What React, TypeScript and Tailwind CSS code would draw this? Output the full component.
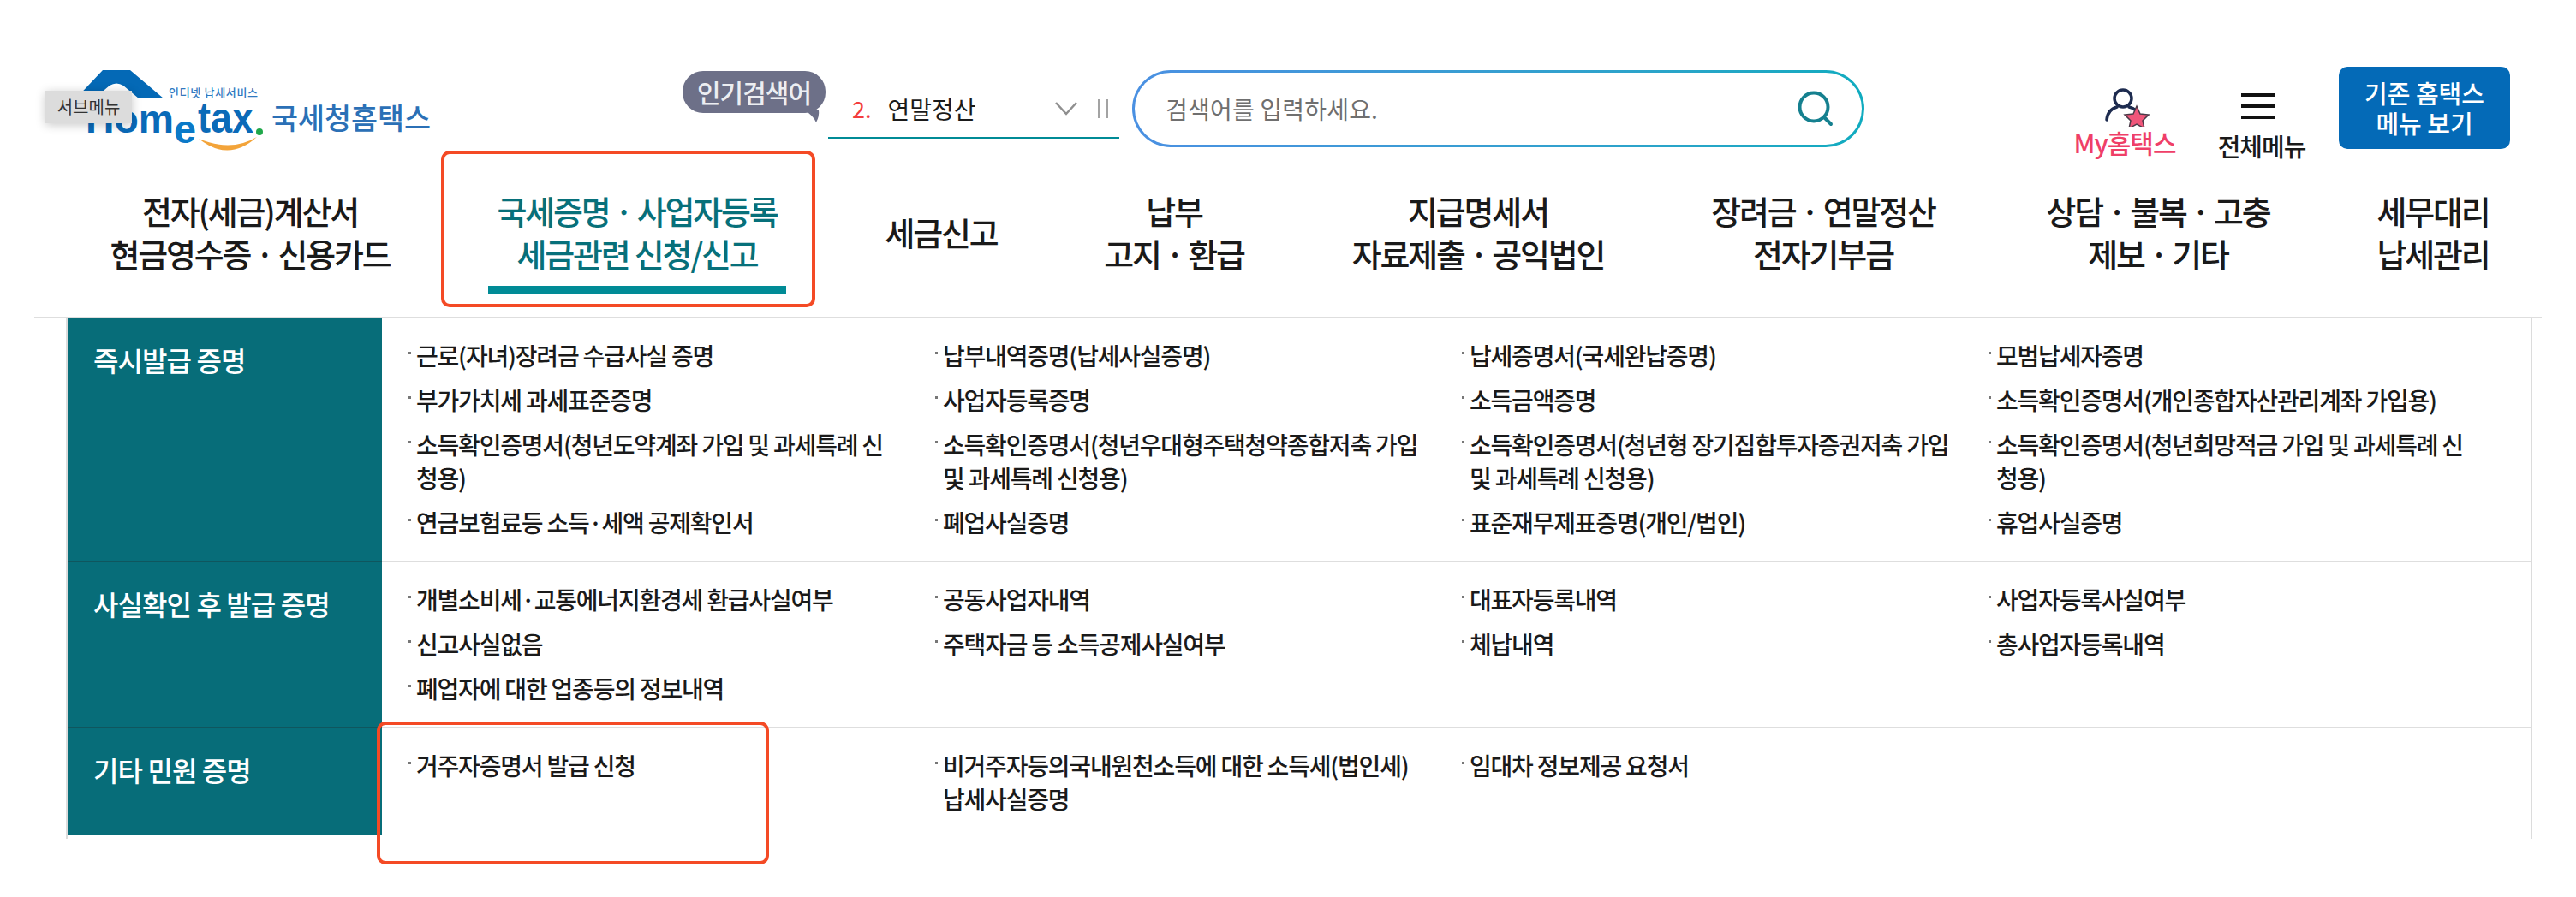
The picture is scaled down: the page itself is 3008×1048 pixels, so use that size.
import React from "react"

const navItems = [
  { lines: ["전자(세금)계산서", "현금영수증 · 신용카드"], width: "w-[464px]" },
  { lines: ["국세증명 · 사업자등록", "세금관련 신청/신고"], width: "w-[440px]", active: true },
  { lines: ["세금신고"], width: "w-[270px]" },
  { lines: ["납부", "고지 · 환급"], width: "w-[274px]" },
  { lines: ["지급명세서", "자료제출 · 공익법인"], width: "w-[436px]" },
  { lines: ["장려금 · 연말정산", "전자기부금"], width: "w-[370px]" },
  { lines: ["상담 · 불복 · 고충", "제보 · 기타"], width: "w-[412px]" },
  { lines: ["세무대리", "납세관리"], width: "w-[230px]" },
]

const sections = [
  {
    title: "즉시발급 증명",
    items: [
      "근로(자녀)장려금 수급사실 증명",
      "납부내역증명(납세사실증명)",
      "납세증명서(국세완납증명)",
      "모범납세자증명",
      "부가가치세 과세표준증명",
      "사업자등록증명",
      "소득금액증명",
      "소득확인증명서(개인종합자산관리계좌 가입용)",
      "소득확인증명서(청년도약계좌 가입 및 과세특례 신\n청용)",
      "소득확인증명서(청년우대형주택청약종합저축 가입\n및 과세특례 신청용)",
      "소득확인증명서(청년형 장기집합투자증권저축 가입\n및 과세특례 신청용)",
      "소득확인증명서(청년희망적금 가입 및 과세특례 신\n청용)",
      "연금보험료등 소득·세액 공제확인서",
      "폐업사실증명",
      "표준재무제표증명(개인/법인)",
      "휴업사실증명",
    ],
  },
  {
    title: "사실확인 후 발급 증명",
    items: [
      "개별소비세·교통에너지환경세 환급사실여부",
      "공동사업자내역",
      "대표자등록내역",
      "사업자등록사실여부",
      "신고사실없음",
      "주택자금 등 소득공제사실여부",
      "체납내역",
      "총사업자등록내역",
      "폐업자에 대한 업종등의 정보내역",
    ],
  },
  {
    title: "기타 민원 증명",
    items: [
      "거주자증명서 발급 신청",
      "비거주자등의국내원천소득에 대한 소득세(법인세)\n납세사실증명",
      "임대차 정보제공 요청서",
    ],
  },
]

const Logo = () => (
  <svg width="460" height="100" viewBox="50 80 460 100" className="block">
    <path d="M120 82h32l39 33h-29l-18-15q-8-5-16 0l-24 20H84z" fill="#0469b6" />
    <text x="100" y="155" fontFamily="Liberation Sans" fontWeight="700" fontSize="46" fill="#0a6ab8" textLength="103" lengthAdjust="spacingAndGlyphs">Hom</text>
    <text x="203" y="167" fontFamily="Liberation Sans" fontWeight="700" fontSize="46" fill="#0a79c8" textLength="26" lengthAdjust="spacingAndGlyphs">e</text>
    <text x="231" y="155" fontFamily="Liberation Sans" fontWeight="700" fontSize="50" fill="#0a6ab8" textLength="65" lengthAdjust="spacingAndGlyphs">tax</text>
    <circle cx="303" cy="154" r="4" fill="#20a84a" />
    <path d="M232 162q35 28 68-2q-30 18-68 2z" fill="#f3a43a" />
    <text x="197" y="113" fontFamily="Noto Sans CJK KR" fontWeight="500" fontSize="13" fill="#2f78bf" textLength="104">인터넷 납세서비스</text>
    <text x="317" y="151" fontFamily="Noto Sans CJK KR" fontWeight="500" fontSize="34" fill="#2b70b6" textLength="186" lengthAdjust="spacingAndGlyphs">국세청홈택스</text>
  </svg>
)

export default function App() {
  return (
    <div className="relative min-h-[1048px] w-[3008px] overflow-hidden bg-white font-['Noto_Sans_CJK_KR',sans-serif] text-[#1a1a1a]">
      <header className="flex h-[176px] items-start">
        <div className="ml-[50px] mt-[80px] w-[460px]">
          <Logo />
        </div>

        <div className="relative ml-[287px] mt-[83px] flex h-[49px] w-[167px] items-center justify-center rounded-[24px] bg-[#6d7088] text-[30px] font-medium tracking-[-1px] text-[#eceef2]">
          인기검색어
          <svg width="20" height="16" viewBox="0 0 20 16" className="absolute right-[6px] top-[45px]">
            <path d="M0 0h18q1 8-3 15Q12 7 0 0z" fill="#6d7088" />
          </svg>
        </div>

        <div className="ml-[3px] mt-[100px] flex h-[62px] w-[340px] items-center border-b-2 border-[#008b96] pl-[28px] pb-[6px]">
          <span className="text-[27px] text-[#f33d3d]">2.</span>
          <span className="ml-[19px] text-[28px] tracking-[0px]">연말정산</span>
          <svg width="26" height="16" viewBox="0 0 26 16" fill="none" stroke="#8f8f8f" strokeWidth="2.5" className="ml-[92px]">
            <path d="M1 1l12 13L25 1" />
          </svg>
          <span className="ml-[24px] h-[22px] w-[12px] border-x-[3px] border-[#a3a3a3]" />
        </div>

        <div className="ml-[15px] mt-[82px] h-[90px] w-[855px] rounded-[45px] bg-gradient-to-r from-[#4a90e2] to-[#0fabbf] p-[3px]">
          <div className="flex h-full items-center justify-between rounded-[42px] bg-white pl-[36px] pr-[33px]">
            <span className="text-[28px] tracking-[0.2px] text-[#6f6f6f]">검색어를 입력하세요.</span>
            <svg width="42" height="42" viewBox="0 0 42 42" fill="none" stroke="#15808f" strokeWidth="4" strokeLinecap="round">
              <circle cx="19" cy="19" r="16.5" />
              <path d="M31 31l8 8" />
            </svg>
          </div>
        </div>

        <div className="ml-[245px] mt-[102px] flex w-[118px] flex-col items-center">
          <svg width="54" height="46" viewBox="0 0 54 46" fill="none" className="ml-[6px]">
            <circle cx="22" cy="13" r="10" stroke="#1d2b4f" strokeWidth="3.5" />
            <path d="M3 38q1-12 12-15M29 23q5 1 8 4" stroke="#1d2b4f" strokeWidth="3.5" strokeLinecap="round" />
            <path d="M38 22l4 9 10 1-7 7 2 9-9-5-9 5 2-9-7-7 10-1z" fill="#f0567a" stroke="#4a3a48" strokeWidth="1.5" />
          </svg>
          <span className="mt-[0px] whitespace-nowrap text-[30px] font-medium leading-[36px] tracking-[-1px] text-[#ef3f68]">My홈택스</span>
        </div>

        <div className="ml-[50px] mt-[109px] flex w-[102px] flex-col items-center">
          <div className="mr-[8px] flex h-[30px] w-[40px] flex-col justify-between">
            <div className="h-[4px] bg-[#111]" />
            <div className="h-[4px] bg-[#111]" />
            <div className="h-[4px] bg-[#111]" />
          </div>
          <span className="mt-[13px] whitespace-nowrap text-[29px] font-medium leading-[36px] tracking-[-1px]">전체메뉴</span>
        </div>

        <div className="ml-[39px] mt-[78px] flex h-[96px] w-[200px] flex-col items-center justify-center rounded-[10px] bg-[#046ab7] text-[29px] font-medium leading-[35px] text-white">
          <span>기존 홈택스</span>
          <span>메뉴 보기</span>
        </div>
      </header>

      <nav className="ml-[60px] flex h-[194px] w-[2896px] items-center">
        {navItems.map((item) => (
          <div key={item.lines[0]} className={`relative flex h-full shrink-0 flex-col items-center justify-center pb-[5px] ${item.width}`}>
            {item.lines.map((line) => (
              <span
                key={line}
                className={`whitespace-nowrap text-[38px] font-medium leading-[50px] tracking-[-2.2px] ${item.active ? "text-[#07707a]" : ""}`}
              >
                {line}
              </span>
            ))}
            {item.active && <div className="absolute left-[46px] top-[158px] h-[10px] w-[348px] bg-[#008b96]" />}
          </div>
        ))}
      </nav>

      <div className="ml-[40px] h-[2px] w-[2928px] bg-[#dedede]" />

      <main className="ml-[77px] h-[608px] w-[2880px] border-x-2 border-[#dcdcdc]">
        {sections.map((section, i) => (
          <section key={section.title} className={`flex ${i === 2 ? "h-[125px]" : ""}`}>
            <h2
              className={`w-[367px] shrink-0 bg-[#076d79] pl-[30px] pt-[26px] text-[32px] font-medium leading-[44px] tracking-[-0.9px] text-white ${
                i === 2 ? "" : "border-b-2 border-[#0f565e]"
              }`}
            >
              {section.title}
            </h2>
            <ul
              className={`grid flex-1 grid-cols-[repeat(4,615px)] content-start gap-y-[13px] pl-[31px] pt-[24px] ${
                i === 2 ? "" : "border-b-2 border-[#dedede] pb-[25px]"
              }`}
            >
              {section.items.map((text) => (
                <li key={text} className="flex items-start">
                  <span className="mr-[6px] mt-[15px] h-[3px] w-[3px] shrink-0 bg-[#777]" />
                  <span className="whitespace-pre-line text-[28px] font-medium leading-[39px] tracking-[-1.2px]">{text}</span>
                </li>
              ))}
            </ul>
          </section>
        ))}
      </main>

      {/* overlays */}
      <div className="absolute left-[53px] top-[106px] flex h-[38px] w-[101px] items-center justify-center bg-[#dcdcdc] text-[20px] text-[#333] shadow-[0_2px_12px_rgba(0,0,0,0.22)]">
        서브메뉴
      </div>
      <div className="absolute left-[515px] top-[176px] h-[183px] w-[437px] rounded-[10px] border-[4px] border-[#f44a25]" />
      <div className="absolute left-[440px] top-[843px] h-[167px] w-[458px] rounded-[10px] border-[4px] border-[#f44a25]" />
    </div>
  )
}
